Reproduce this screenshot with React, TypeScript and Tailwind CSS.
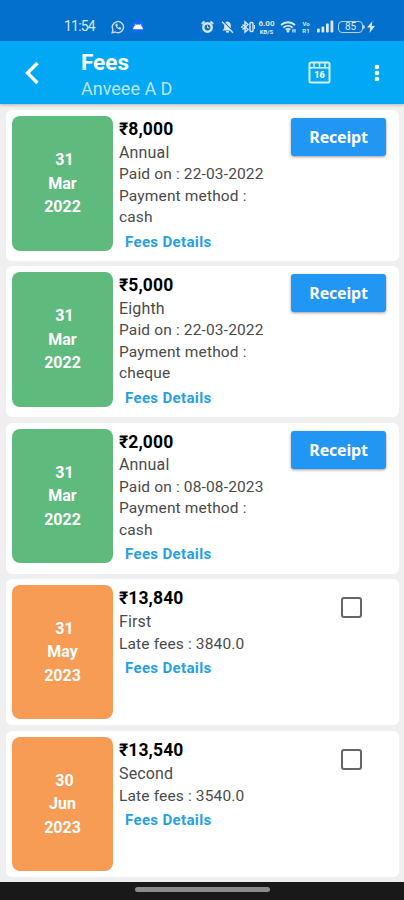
import React from "react";

type Fee = {
  day: string;
  month: string;
  year: string;
  amount: string;
  title: string;
  paidOn?: string;
  method?: string;
  lateFees?: string;
};

const fees: Fee[] = [
  { day: "31", month: "Mar", year: "2022", amount: "₹8,000", title: "Annual", paidOn: "22-03-2022", method: "cash" },
  { day: "31", month: "Mar", year: "2022", amount: "₹5,000", title: "Eighth", paidOn: "22-03-2022", method: "cheque" },
  { day: "31", month: "Mar", year: "2022", amount: "₹2,000", title: "Annual", paidOn: "08-08-2023", method: "cash" },
  { day: "31", month: "May", year: "2023", amount: "₹13,840", title: "First", lateFees: "3840.0" },
  { day: "30", month: "Jun", year: "2023", amount: "₹13,540", title: "Second", lateFees: "3540.0" },
];

const WhatsappIcon = () => (
  <svg width="14" height="14" viewBox="0 0 14 14" fill="none" stroke="#c9dcf5" strokeWidth="1.4">
    <path d="M1.2 12.8l.8-3a5.6 5.6 0 1 1 2.2 2.2z" />
    <path d="M4.500 3.800c-.6 3 2.400 6 5.300 5.800l.7-1.600-1.900-1-.9.800c-.7-.3-1.200-.8-1.500-1.500l.7-.9-.9-1.800z" fill="#c9dcf5" stroke="none" />
  </svg>
);

const AndroidIcon = () => (
  <svg width="12" height="12" viewBox="0 0 12 12">
    <rect width="12" height="12" rx="2" fill="#1268f0" />
    <path d="M1 8.300a5 4.800 0 0 1 10 0z" fill="#fff" />
    <path d="M2.800 2.800l1 1.500M9.200 2.800l-1 1.500" stroke="#fff" strokeWidth=".8" />
  </svg>
);

const StatusIcons = () => (
  <div className="flex items-center text-[#dbe8fa]">
    <svg width="13" height="14" viewBox="0 0 13 14" fill="none" stroke="currentColor">
      <circle cx="6.500" cy="7.500" r="4.200" strokeWidth="2.400" />
      <path d="M.8 4L3.500 1.500M12.200 4L9.500 1.500" strokeWidth="2" />
      <path d="M6.500 5.500v2.300h1.800" strokeWidth="1" />
    </svg>
    <svg className="ml-[7px]" width="13" height="14" viewBox="0 0 13 14">
      <path d="M6.500 1.500c-2.600.5-3.300 2-3.300 4.500v2.500L1.500 10.500h10L9.800 8.500V6c0-2.500-.7-4-3.300-4.500z" fill="currentColor" />
      <path d="M5 11.800h3" stroke="currentColor" strokeWidth="1.500" />
      <path d="M1.500 .8l11 11.200" stroke="#0470cd" strokeWidth="1.400" />
      <path d="M1 1.800l11 11" stroke="currentColor" strokeWidth="1.300" />
    </svg>
    <svg className="ml-[7px]" width="14" height="14" viewBox="0 0 14 14" fill="none" stroke="currentColor" strokeWidth="1.400">
      <path d="M1.500 4.500l5.500 5-3 2.700V1.800l3 2.700-5.500 5" />
      <path d="M0 7h2" />
      <rect x="9" y="2.500" width="3" height="9" rx="1" />
      <path d="M13.500 5v4" strokeWidth="1" />
    </svg>
    <div className="ml-[2px] w-[19px] text-center font-bold">
      <div className="text-[8px] leading-[9px]">6.00</div>
      <div className="text-[6px] leading-[7px]">KB/S</div>
    </div>
    <svg className="ml-1" width="17" height="14" viewBox="0 0 17 14" fill="none" stroke="currentColor" strokeWidth="1.800">
      <path d="M1 5c4-3.700 10-3.700 14 0M3.400 7.500c2.700-2.300 6.500-2.300 9.200 0M5.700 9.800c1.400-1.200 3.200-1.200 4.600 0" />
      <path d="M8 9.800l-1.700 1.200L8 13l1.700-2z" fill="currentColor" stroke="none" />
      <path d="M13 9v3.500M15 9v3.500" strokeWidth="1.200" />
    </svg>
    <div className="ml-[4px] w-[10px] text-center text-[6px] font-bold leading-[7px]">
      <div>Vo</div>
      <div>R1</div>
    </div>
    <svg className="ml-[6px]" width="17" height="13" viewBox="0 0 17 13" fill="currentColor">
      <rect x="0" y="8.500" width="2.800" height="4" rx="1" />
      <rect x="4.500" y="6.500" width="2.800" height="6" rx="1" />
      <rect x="9" y="3.500" width="2.800" height="9" rx="1" />
      <rect x="13.500" y="0.500" width="2.800" height="12" rx="1" />
    </svg>
    <div className="ml-[4px] flex h-3 w-[25px] items-center justify-center rounded-[4px] border border-[#b9d2f2] text-[10px] leading-none">85</div>
    <div className="h-1 w-[2px] rounded-r bg-[#b9d2f2]" />
    <svg className="ml-[2px]" width="8" height="12" viewBox="0 0 8 12" fill="currentColor">
      <path d="M5.500 0L0 6.500h3.200L2.500 12 8 5H4.700z" />
    </svg>
  </div>
);

const CalendarIcon = () => (
  <svg width="23" height="23" viewBox="0 0 23 23" fill="none" stroke="#d3f0ff">
    <rect x="1.500" y="1.500" width="20" height="20" rx="1.500" strokeWidth="2" />
    <path d="M1 6.800h21" strokeWidth="1.600" />
    <path d="M6 1.500v4.500M11.500 1.500v4.500M17 1.500v4.500" strokeWidth="1.500" />
    <text x="11.500" y="16.800" textAnchor="middle" fontFamily="Roboto" fontSize="9" fontWeight="900" fill="#fff" stroke="none">16</text>
  </svg>
);

const FeeCard = ({ fee }: { fee: Fee }) => {
  const paid = Boolean(fee.paidOn);
  return (
    <div className={`flex rounded-md bg-white pl-[6px] pt-[6px] ${paid ? "h-[151px]" : "h-[146.500px]"}`}>
      <div className={`flex h-[134.500px] w-[101px] shrink-0 flex-col items-center justify-center rounded-lg text-base font-bold leading-[23.500px] text-white ${paid ? "bg-[#5fba7d]" : "bg-[#f69c55]"}`}>
        <div className="pl-1">{fee.day}</div>
        <div>{fee.month}</div>
        <div>{fee.year}</div>
      </div>
      <div className="ml-[6px] w-[172px] shrink-0 pt-px text-[15.500px] leading-[21.500px] tracking-[0.15px] text-[#4a4a4a]">
        <div className="text-[17.500px] font-bold leading-[24.500px] tracking-[0.1px] text-black">{fee.amount}</div>
        <div className={`text-base ${paid ? "leading-[22.500px]" : "leading-[23.500px]"}`}>{fee.title}</div>
        {fee.paidOn && <div>Paid on : {fee.paidOn}</div>}
        {fee.method && <div>Payment method :<br />{fee.method}</div>}
        {fee.lateFees && <div>Late fees : {fee.lateFees}</div>}
        <button className="ml-[6px] mt-[3px] block text-[15px] font-bold tracking-[0.35px] text-[#279fe5]">Fees Details</button>
      </div>
      {paid ? (
        <button className="mt-[2px] h-[38px] w-[95px] rounded-[3px] bg-[#2296f3] font-['Noto_Sans'] text-base font-bold tracking-[-0.2px] text-white shadow-[0_1px_3px_rgba(0,0,0,0.4)]">
          Receipt
        </button>
      ) : (
        <div className="ml-[50px] mt-3 h-[21px] w-[21px] rounded-[3px] border-2 border-[#666]" />
      )}
    </div>
  );
};

export default function App() {
  return (
    <div className="flex h-[900px] w-[404px] flex-col overflow-hidden bg-[#efefef] font-[Roboto,sans-serif]">
      <div className="flex h-[41px] shrink-0 items-center bg-[#0470cd] pl-16 pt-[12px]">
        <span className="w-[47px] text-[14px] tracking-[-0.8px] text-[#dbe8fa]">11:54</span>
        <WhatsappIcon />
        <div className="ml-[7px]"><AndroidIcon /></div>
        <div className="ml-[57px]"><StatusIcons /></div>
      </div>

      <header className="flex h-[63px] shrink-0 items-center bg-[#03a8f5] text-white shadow-[0_1px_3px_rgba(0,0,0,0.25)]">
        <svg className="ml-[24px] shrink-0" width="16" height="24" viewBox="0 0 16 24" fill="none" stroke="#fff" strokeWidth="3.400">
          <path d="M13.500 2L3.500 12l10 10" />
        </svg>
        <div className="ml-[41px] w-[227px] pt-[6px]">
          <h1 className="text-[22.500px] font-bold leading-[27px]">Fees</h1>
          <p className="text-[18px] leading-[26px] text-[#b8e5fc]">Anveee A D</p>
        </div>
        <CalendarIcon />
        <svg className="ml-[43px]" width="6" height="18" viewBox="0 0 6 18" fill="#fff">
          <circle cx="3" cy="3" r="2.300" />
          <circle cx="3" cy="9" r="2.300" />
          <circle cx="3" cy="15" r="2.300" />
        </svg>
      </header>

      <main className="flex flex-1 flex-col gap-[5.300px] pl-[6px] pr-[5px] pt-[6px]">
        {fees.map((fee, index) => (
          <FeeCard key={index} fee={fee} />
        ))}
      </main>

      <div className="flex h-[18px] shrink-0 justify-center bg-[#191919] pt-[5px]">
        <div className="h-[5px] w-[135px] rounded-full bg-[#8b8b8b]" />
      </div>
    </div>
  );
}
